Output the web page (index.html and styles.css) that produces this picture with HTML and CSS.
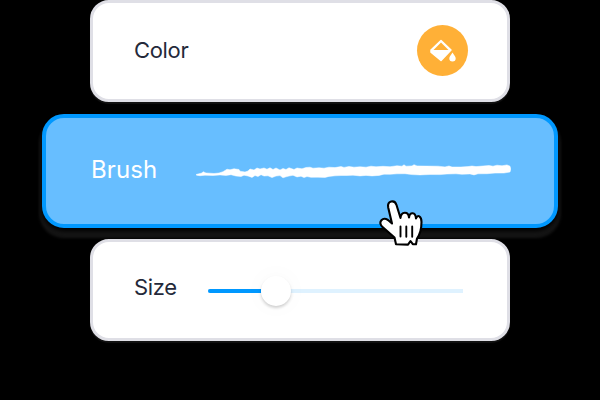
FILE: index.html
```html
<!DOCTYPE html>
<html lang="en">
<head>
<meta charset="utf-8">
<title>Brush settings</title>
<link rel="stylesheet" href="styles.css">
</head>
<body>
<main class="panel">
  <section class="card card-color">
    <span class="label">Color</span>
    <button class="swatch" aria-label="Fill color">
      <svg width="51" height="51" viewBox="0 0 51 51">
        <path d="M24 15.500 34 25 24 35.500 14 27.200V25Z" fill="#fff" stroke="#fff" stroke-width="1.500" stroke-linejoin="round"/>
        <path d="M24 17.500 31.500 25H16.500Z" fill="#ffb037"/>
        <path d="M35.500 27.500c1.500 2.400 3.200 4.100 3.200 5.700a3.200 3.200 0 0 1-6.400 0c0-1.600 1.700-3.300 3.200-5.700Z" fill="#fff"/>
      </svg>
    </button>
  </section>
  <section class="card card-brush">
    <span class="label">Brush</span>
    <svg class="stroke" width="315" height="24" viewBox="196 160 315 24" fill="#fff" stroke="#fff" stroke-width="0.500">
      <path d="M196 174.500 202 173 203 171.700 206 173 210 173.200 214 173.500 219 173 223 171.700 225 170.500 227 169.200 230 169.800 234 168.800 239 169.500 240 171.200 245 172 248 171 250 169 254 170 257 168 260 169 264 168 267 169.200 270 167.800 273 169.500 276 168 280 170 283 168.500 286 169.500 289 167.800 294 169.500 297 168 302 168.800 306 167.500 310 167.200 313 168.200 319 167.800 324 168.200 329 167.200 335 167.600 341 166.600 344 167.400 349 166.500 354 167.200 360 166.800 366 167.200 371 166.200 376 166.800 383 166.300 390 166.700 397 165.800 402 166.200 404 164.800 406 166.200 412 165.900 414 164.700 417 165.900 426 166.100 438 166.200 445 166.900 449 166 452 167 461 167 468 166.600 472 166 476 166.600 483 166 489 165.500 493 166.200 497 165.200 502 165.800 507 164.900 510 166.200 510.800 169 510 172 504 173 495 173.100 487 173.700 478 173.800 474 174.900 470 173.900 462 174.300 456 173.800 447 174 440 174.600 430 174.500 420 174.900 412 174.600 405 173.700 397 173.800 390 174.300 384 174.200 379 175.400 372 175.900 366 175.400 360 175.900 353 175.200 347 175.500 341 175.500 335 175.800 329 176.400 325 177.400 318 177.200 311 177.300 307 176.500 304 177.600 301 176.200 297 176.900 293 175.300 289 176 286 176.800 283 177.800 280 175.600 276 176 272 177.600 268 175.800 264 176 261 174.700 258 176.500 255 175.500 252 177.400 248 176 244 175.200 241 176.500 236 176 231 174.700 226 175.400 220 174.900 213 175.500 205 175.200 200 175.700 196.500 175.200Z"/>
    </svg>
  </section>
  <section class="card card-size">
    <span class="label">Size</span>
    <div class="track"><div class="filled"></div><div class="thumb"></div></div>
  </section>
  <svg class="cursor" width="56" height="56" viewBox="0 0 56 56">
    <path d="M22 49.300 20.500 42.500 8 31.500C4 27 8.500 21.500 14 25L18 28.500 14.200 12.500C13 6 20.500 4 22.500 10L26.500 23C27 16 34.500 16 35 22.500 36 16.500 41.500 17 42 23.500 43.500 19 47.500 21 47.500 27 47.500 35 45.500 40 43 43.500L42 49.200 38.800 49.200 36.500 46 34 49.600Z" fill="#fff" stroke="#000" stroke-width="2.100" stroke-linejoin="round"/>
    <path d="M26.500 31.500V41.500M32.300 31.500V41.700M38.200 31.500V41.700" stroke="#000" stroke-width="1.900" stroke-linecap="round"/>
  </svg>
</main>
</body>
</html>
```
FILE: styles.css
```css
* { box-sizing: border-box; }
body {
  margin: 0;
  background: #000;
  font-family: Inter, sans-serif;
  overflow: hidden;
}
.panel {
  position: relative;
  width: 600px;
  height: 400px;
  display: flex;
  flex-direction: column;
  align-items: center;
}
.card {
  width: 420px;
  height: 102px;
  display: flex;
  align-items: center;
  background: #fff;
  border: 3px solid #dfdfe6;
  border-radius: 19px;
  color: #24293a;
  font-size: 22px;
  letter-spacing: -0.35px;
  box-shadow: 0 2px 1px #121212;
}
.label { line-height: 28px; }
.card-color {
  justify-content: space-between;
  padding: 0 39px 1px 41px;
}
.card-color .label,
.card-brush .label { margin-bottom: 2px; }
.swatch {
  display: block;
  width: 51px;
  height: 51px;
  padding: 0;
  border: 0;
  border-radius: 50%;
  background: #ffb037;
}
.swatch svg { display: block; }
.card-brush {
  width: 516px;
  height: 114px;
  margin: 12px 0 11px;
  padding: 0 43px 0 45px;
  justify-content: space-between;
  border: 4px solid #0098ff;
  border-radius: 22px;
  background: #67beff;
  color: #fff;
  font-size: 24px;
  letter-spacing: 0.1px;
  box-shadow: 0 3px 4px #000, 0 7px 3px 3px #151515;
}
.stroke {
  display: block;
  margin-top: 2px;
}
.card-size {
  padding: 0 44px 6px 41px;
  justify-content: space-between;
}
.track {
  width: 255px;
  height: 30px;
  margin-top: 8px;
  display: flex;
  align-items: center;
  background: linear-gradient(#dff2ff, #dff2ff) center / 100% 4px no-repeat;
}
.filled {
  width: 53px;
  height: 4px;
  border-radius: 2px 0 0 2px;
  background: #0098ff;
}
.thumb {
  width: 30px;
  height: 30px;
  border-radius: 50%;
  background: #fff;
  box-shadow: 0 2px 3px #0000002e, 0 0 24px #00000008;
}
.cursor {
  position: absolute;
  left: 374px;
  top: 195px;
}
```
